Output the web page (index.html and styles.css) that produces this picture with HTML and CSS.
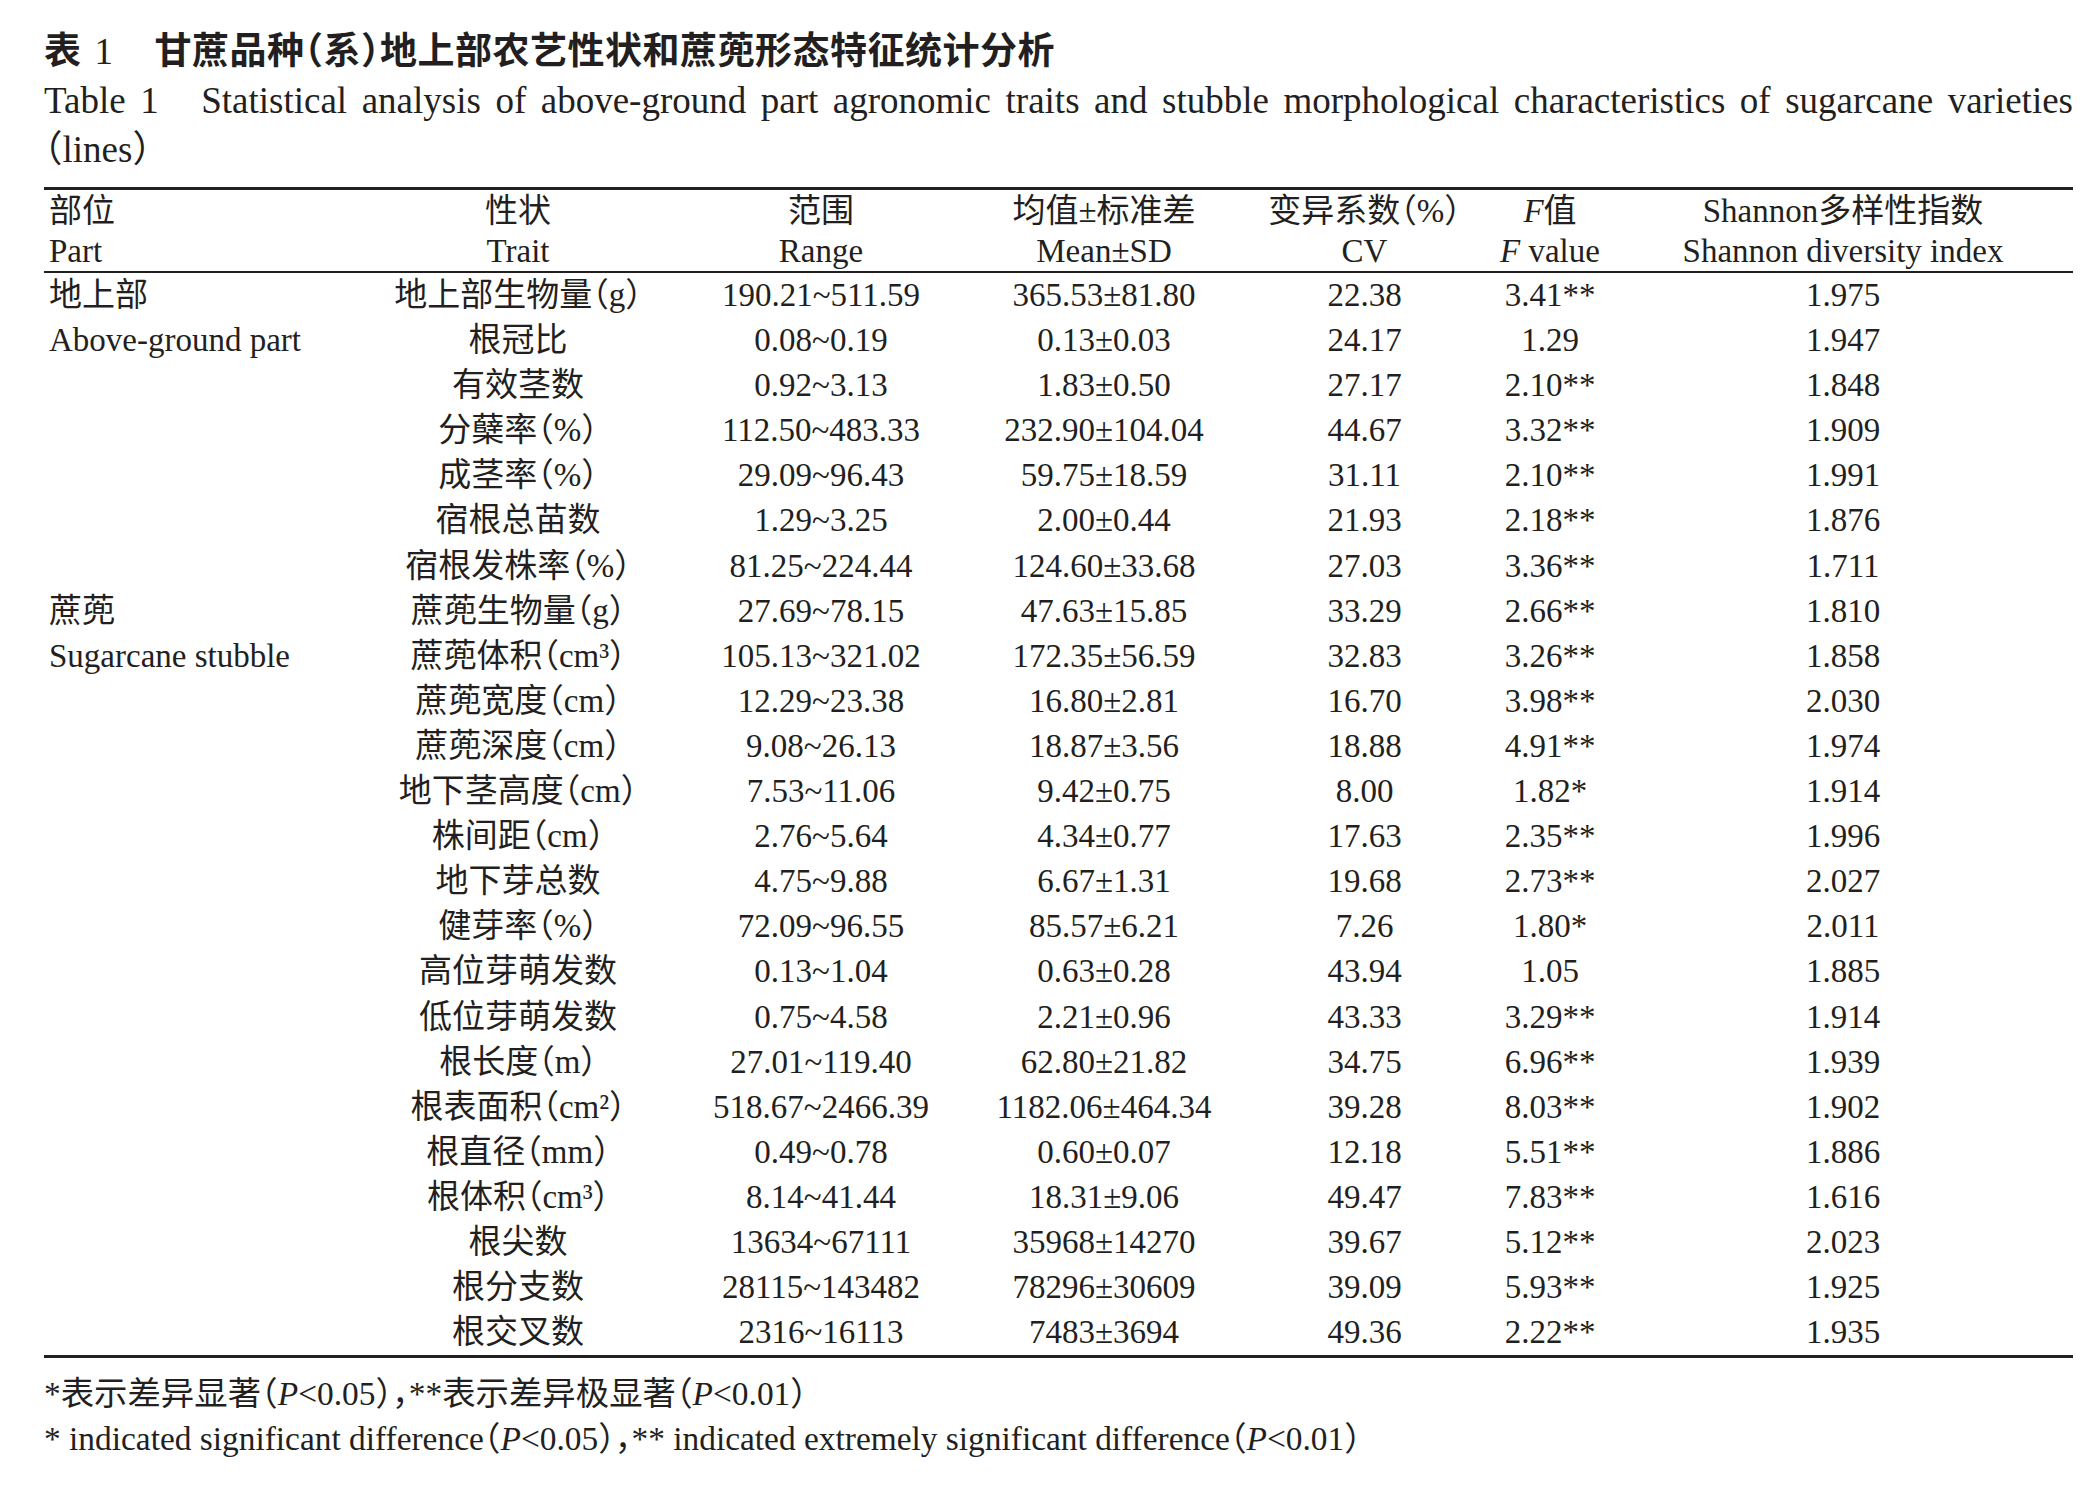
FILE: index.html
```html
<!DOCTYPE html>
<html lang="zh-CN">
<head>
<meta charset="utf-8">
<title>表 1 甘蔗品种（系）地上部农艺性状和蔗蔸形态特征统计分析</title>
<link rel="stylesheet" href="styles.css">
</head>
<body>
<div class="page">
  <h1 class="title-cn">表<span class="tno-cn">1</span>甘蔗品种（系）地上部农艺性状和蔗蔸形态特征统计分析</h1>
  <p class="title-en"><span class="tno">Table 1</span> Statistical analysis of above-ground part agronomic traits and stubble morphological characteristics of sugarcane varieties （lines）</p>
  <table class="data">
    <colgroup>
      <col class="c1"><col class="c2"><col class="c3"><col class="c4"><col class="c5"><col class="c6"><col class="c7">
    </colgroup>
    <thead>
      <tr>
        <th class="part">部位<br>Part</th>
        <th>性状<br>Trait</th>
        <th>范围<br>Range</th>
        <th>均值±标准差<br>Mean±SD</th>
        <th>变异系数（%）<br>CV</th>
        <th><i>F</i>值<br><i>F</i> value</th>
        <th>Shannon多样性指数<br>Shannon diversity index</th>
      </tr>
    </thead>
    <tbody>
      <tr><td class="part" rowspan="7">地上部<br>Above-ground part</td><td>地上部生物量（g）</td><td>190.21~511.59</td><td>365.53±81.80</td><td>22.38</td><td>3.41**</td><td>1.975</td></tr>
      <tr><td>根冠比</td><td>0.08~0.19</td><td>0.13±0.03</td><td>24.17</td><td>1.29</td><td>1.947</td></tr>
      <tr><td>有效茎数</td><td>0.92~3.13</td><td>1.83±0.50</td><td>27.17</td><td>2.10**</td><td>1.848</td></tr>
      <tr><td>分蘖率（%）</td><td>112.50~483.33</td><td>232.90±104.04</td><td>44.67</td><td>3.32**</td><td>1.909</td></tr>
      <tr><td>成茎率（%）</td><td>29.09~96.43</td><td>59.75±18.59</td><td>31.11</td><td>2.10**</td><td>1.991</td></tr>
      <tr><td>宿根总苗数</td><td>1.29~3.25</td><td>2.00±0.44</td><td>21.93</td><td>2.18**</td><td>1.876</td></tr>
      <tr><td>宿根发株率（%）</td><td>81.25~224.44</td><td>124.60±33.68</td><td>27.03</td><td>3.36**</td><td>1.711</td></tr>
      <tr><td class="part" rowspan="17">蔗蔸<br>Sugarcane stubble</td><td>蔗蔸生物量（g）</td><td>27.69~78.15</td><td>47.63±15.85</td><td>33.29</td><td>2.66**</td><td>1.810</td></tr>
      <tr><td>蔗蔸体积（cm³）</td><td>105.13~321.02</td><td>172.35±56.59</td><td>32.83</td><td>3.26**</td><td>1.858</td></tr>
      <tr><td>蔗蔸宽度（cm）</td><td>12.29~23.38</td><td>16.80±2.81</td><td>16.70</td><td>3.98**</td><td>2.030</td></tr>
      <tr><td>蔗蔸深度（cm）</td><td>9.08~26.13</td><td>18.87±3.56</td><td>18.88</td><td>4.91**</td><td>1.974</td></tr>
      <tr><td>地下茎高度（cm）</td><td>7.53~11.06</td><td>9.42±0.75</td><td>8.00</td><td>1.82*</td><td>1.914</td></tr>
      <tr><td>株间距（cm）</td><td>2.76~5.64</td><td>4.34±0.77</td><td>17.63</td><td>2.35**</td><td>1.996</td></tr>
      <tr><td>地下芽总数</td><td>4.75~9.88</td><td>6.67±1.31</td><td>19.68</td><td>2.73**</td><td>2.027</td></tr>
      <tr><td>健芽率（%）</td><td>72.09~96.55</td><td>85.57±6.21</td><td>7.26</td><td>1.80*</td><td>2.011</td></tr>
      <tr><td>高位芽萌发数</td><td>0.13~1.04</td><td>0.63±0.28</td><td>43.94</td><td>1.05</td><td>1.885</td></tr>
      <tr><td>低位芽萌发数</td><td>0.75~4.58</td><td>2.21±0.96</td><td>43.33</td><td>3.29**</td><td>1.914</td></tr>
      <tr><td>根长度（m）</td><td>27.01~119.40</td><td>62.80±21.82</td><td>34.75</td><td>6.96**</td><td>1.939</td></tr>
      <tr><td>根表面积（cm²）</td><td>518.67~2466.39</td><td>1182.06±464.34</td><td>39.28</td><td>8.03**</td><td>1.902</td></tr>
      <tr><td>根直径（mm）</td><td>0.49~0.78</td><td>0.60±0.07</td><td>12.18</td><td>5.51**</td><td>1.886</td></tr>
      <tr><td>根体积（cm³）</td><td>8.14~41.44</td><td>18.31±9.06</td><td>49.47</td><td>7.83**</td><td>1.616</td></tr>
      <tr><td>根尖数</td><td>13634~67111</td><td>35968±14270</td><td>39.67</td><td>5.12**</td><td>2.023</td></tr>
      <tr><td>根分支数</td><td>28115~143482</td><td>78296±30609</td><td>39.09</td><td>5.93**</td><td>1.925</td></tr>
      <tr><td>根交叉数</td><td>2316~16113</td><td>7483±3694</td><td>49.36</td><td>2.22**</td><td>1.935</td></tr>
    </tbody>
  </table>
  <div class="notes">
    <p>*表示差异显著（<i>P</i>&lt;0.05），**表示差异极显著（<i>P</i>&lt;0.01）</p>
    <p>* indicated significant difference（<i>P</i>&lt;0.05），** indicated extremely significant difference（<i>P</i>&lt;0.01）</p>
  </div>
</div>
</body>
</html>
```
FILE: styles.css
```css
html, body {
  margin: 0;
  padding: 0;
  background: #ffffff;
}

body {
  color: #231f20;
  font-family: "Liberation Serif", "Noto Sans CJK SC", serif;
  font-feature-settings: "halt";
}

.page {
  width: 2029px;
  margin-left: 44px;
  padding-top: 27px;
}

.title-cn {
  margin: 0;
  font-size: 37px;
  line-height: 49px;
  font-weight: 700;
  letter-spacing: 0.5px;
}

.tno-cn {
  font-weight: 400;
  margin: 0 41px 0 13px;
}

.title-en {
  margin: 0;
  font-size: 37px;
  line-height: 49px;
  text-align: justify;
}

.tno {
  margin-right: 28px;
}

.data {
  margin-top: 13px;
  width: 2029px;
  table-layout: fixed;
  border-collapse: separate;
  border-spacing: 0;
  border-top: 3px solid #231f20;
  border-bottom: 3px solid #231f20;
  font-size: 33px;
}

.c1 { width: 316px; }
.c2 { width: 316px; }
.c3 { width: 290px; }
.c4 { width: 276px; }
.c5 { width: 245px; }
.c6 { width: 126px; }
.c7 { width: 460px; }

.data th {
  font-weight: 400;
  line-height: 40px;
  padding: 1px 0 0;
  border-bottom: 2px solid #231f20;
  text-align: center;
  white-space: nowrap;
}

.data td {
  height: 45.1px;
  line-height: 45.1px;
  padding: 0;
  text-align: center;
  white-space: nowrap;
}

.data th.part,
.data td.part {
  text-align: left;
  vertical-align: top;
  padding-left: 5px;
}

.notes {
  margin-top: 13px;
  font-size: 33.4px;
  line-height: 45px;
}

.notes p {
  margin: 0;
}
```
